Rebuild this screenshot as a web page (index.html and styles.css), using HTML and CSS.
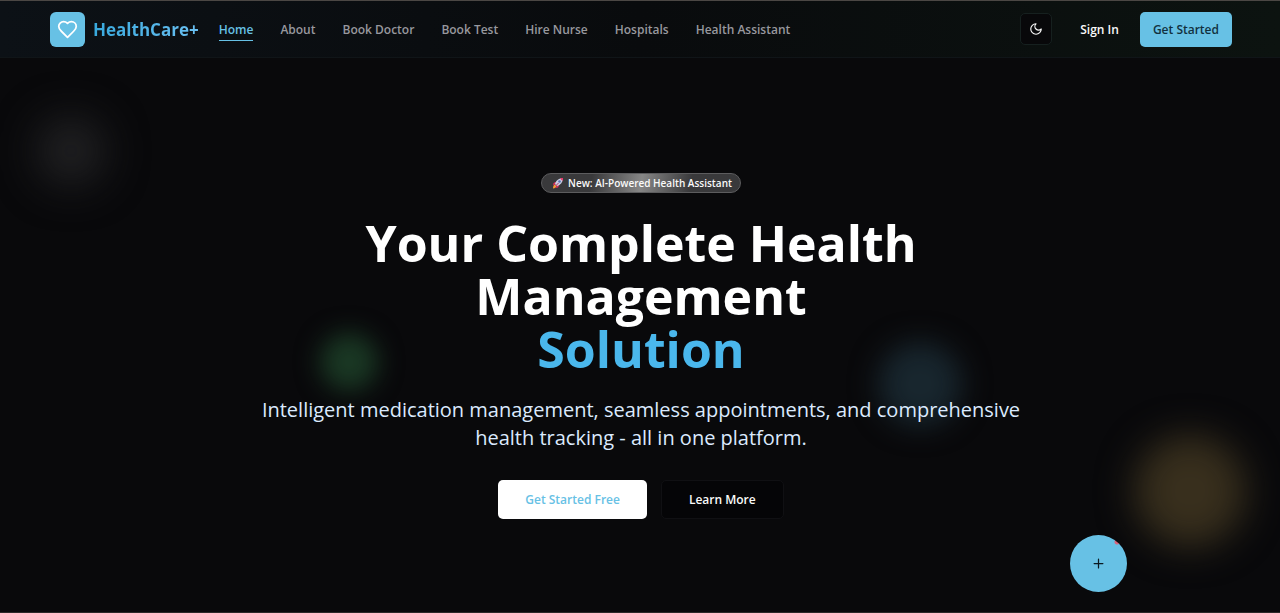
FILE: index.html
```html
<!DOCTYPE html>
<html lang="en">
<head>
<meta charset="utf-8">
<meta name="viewport" content="width=device-width, initial-scale=1">
<title>HealthCare+</title>
<link rel="stylesheet" href="styles.css">
</head>
<body>
<header class="navbar">
  <a class="brand" href="#">
    <span class="brand-mark">
      <svg width="21" height="21" viewBox="0 0 24 24" fill="none" stroke="currentColor" stroke-width="2" stroke-linecap="round" stroke-linejoin="round" aria-hidden="true"><path d="M19 14c1.49-1.46 3-3.21 3-5.5A5.5 5.5 0 0 0 16.500 3c-1.760 0-3 .5-4.500 2-1.500-1.500-2.740-2-4.500-2A5.500 5.500 0 0 0 2 8.500c0 2.300 1.500 4.050 3 5.500l7 7Z"/></svg>
    </span>
    <span class="brand-name">HealthCare+</span>
  </a>
  <nav class="nav-links" aria-label="Main">
    <a class="nav-link active" href="#">Home</a>
    <a class="nav-link" href="#">About</a>
    <a class="nav-link" href="#">Book Doctor</a>
    <a class="nav-link" href="#">Book Test</a>
    <a class="nav-link" href="#">Hire Nurse</a>
    <a class="nav-link" href="#">Hospitals</a>
    <a class="nav-link" href="#">Health Assistant</a>
  </nav>
  <div class="nav-actions">
    <button class="theme-toggle" type="button" aria-label="Toggle theme">
      <svg width="14" height="14" viewBox="0 0 24 24" fill="none" stroke="currentColor" stroke-width="2" stroke-linecap="round" stroke-linejoin="round" aria-hidden="true"><path d="M12 3a6 6 0 0 0 9 9 9 9 0 1 1-9-9Z"/></svg>
    </button>
    <a class="sign-in" href="#">Sign In</a>
    <button class="btn-start" type="button">Get Started</button>
  </div>
</header>

<main class="hero">
  <div class="glow glow-white"></div>
  <div class="glow glow-green"></div>
  <div class="glow glow-blue"></div>
  <div class="glow glow-amber"></div>
  <div class="hero-content">
    <div class="badge">
      <svg class="rocket" width="12" height="12" viewBox="0 0 24 24" aria-hidden="true">
        <path d="M2 23c0-4 1-7 4-8l3 3c-1 3-3 5-7 5Z" fill="#f59a36"/>
        <path d="M9 9 3 12l-1 5 6-3ZM15 15l-3 6-5 1 3-6Z" fill="#dd2e5c"/>
        <path d="M6 14C8 7 14 2 22 2c0 8-5 14-12 16Z" fill="#c9cfe6"/>
        <path d="M16 3c2-1 4-1 6-1 0 2 0 4-1 6Z" fill="#e8396b"/>
        <circle cx="15" cy="9" r="2.600" fill="#5b6fae"/>
        <path d="m8 17 5-5" stroke="#b0305c" stroke-width="2"/>
      </svg>
      <span>New: AI-Powered Health Assistant</span>
    </div>
    <h1 class="title">Your Complete Health Management <span class="title-accent">Solution</span></h1>
    <p class="lead">Intelligent medication management, seamless appointments, and comprehensive health tracking - all in one platform.</p>
    <div class="hero-actions">
      <button class="btn btn-light" type="button">Get Started Free</button>
      <button class="btn btn-dark" type="button">Learn More</button>
    </div>
  </div>
</main>

<button class="fab" type="button" aria-label="Open quick actions">
  <svg width="15" height="15" viewBox="0 0 24 24" fill="none" stroke="currentColor" stroke-width="2" stroke-linecap="round" aria-hidden="true"><path d="M5 12h14M12 5v14"/></svg>
</button>
</body>
</html>
```
FILE: styles.css
```css
* {
  box-sizing: border-box;
}

body {
  margin: 0;
  min-height: 100vh;
  display: flex;
  flex-direction: column;
  background: #09090b;
  color: #fafafa;
  font-family: "Segoe UI", "Open Sans", "Noto Sans", sans-serif;
  font-size: 12px;
  border-top: 1px solid #4b4744;
  border-bottom: 1px solid #2b2929;
}

a {
  color: inherit;
  text-decoration: none;
}

button {
  font: inherit;
  color: inherit;
  border: 0;
  padding: 0;
  cursor: pointer;
}

svg {
  display: block;
}

.navbar {
  display: flex;
  align-items: center;
  height: 57px;
  padding: 0 48px 0 50px;
  border-bottom: 1px solid #101518;
  background: linear-gradient(90deg, #0c1116 0%, #090b0d 50%, #0c1310 100%);
}

.brand {
  display: flex;
  align-items: center;
  gap: 8px;
}

.brand-mark {
  display: grid;
  place-items: center;
  width: 35px;
  height: 35px;
  border-radius: 6px;
  background: #67c1e5;
  color: #fff;
}

.brand-name {
  padding-top: 2px;
  font-size: 17px;
  font-weight: 700;
  line-height: 24px;
  background: linear-gradient(90deg, #38a9dd, #6ac0f2);
  background-clip: text;
  color: transparent;
}

.nav-links {
  display: flex;
  gap: 27px;
  margin-left: 20px;
}

.nav-link {
  padding-top: 3px;
  border-bottom: 1px solid transparent;
  color: #98989e;
  font-weight: 600;
  line-height: 20px;
}

.nav-link.active {
  color: #67c1e5;
  border-color: #67c1e5;
}

.nav-actions {
  display: flex;
  align-items: center;
  margin-left: auto;
  font-weight: 600;
}

.theme-toggle {
  display: grid;
  place-items: center;
  width: 32px;
  height: 32px;
  border: 1px solid #16201f;
  border-radius: 5px;
  background: #08080a;
}

.sign-in {
  padding: 0 21px 0 28px;
}

.btn-start {
  height: 35px;
  padding: 0 13px;
  border-radius: 5px;
  background: #67c1e5;
  color: #12313f;
}

.hero {
  position: relative;
  flex: 1;
  display: flex;
  flex-direction: column;
  align-items: center;
  padding: 115px 24px 40px 26px;
  overflow: hidden;
}

.glow {
  position: absolute;
  border-radius: 50%;
}

.glow-white {
  left: 36px;
  top: 58px;
  width: 70px;
  height: 70px;
  background: #202022;
  filter: blur(20px);
}

.glow-green {
  left: 320px;
  top: 275px;
  width: 58px;
  height: 58px;
  background: #1a3824;
  filter: blur(12px);
}

.glow-blue {
  right: 318px;
  top: 284px;
  width: 84px;
  height: 84px;
  background: #18262e;
  filter: blur(14px);
}

.glow-amber {
  right: 34px;
  top: 377px;
  width: 112px;
  height: 112px;
  background: #382f1d;
  filter: blur(18px);
}

.hero-content {
  position: relative;
  display: flex;
  flex-direction: column;
  align-items: center;
  max-width: 784px;
  text-align: center;
}

.badge {
  display: flex;
  align-items: center;
  gap: 4px;
  height: 20px;
  padding: 0 8px 0 10px;
  border: 1px solid #5c5c5e;
  border-radius: 10px;
  background: linear-gradient(100deg, #39393b 25%, #868686 50%, #39393b 75%);
  font-size: 10px;
  font-weight: 600;
  white-space: nowrap;
}

.title {
  margin: 24px 0 0;
  max-width: 600px;
  font-size: 50px;
  font-weight: 700;
  line-height: 53px;
  color: #fff;
}

.title-accent {
  display: block;
  color: #4ab7ec;
}

.lead {
  margin: 20px 0 0;
  font-size: 20px;
  line-height: 28px;
  color: #dbeafe;
}

.hero-actions {
  display: flex;
  gap: 14px;
  margin-top: 28px;
}

.btn {
  height: 39px;
  padding: 0 27px;
  border-radius: 5px;
  font-weight: 600;
}

.btn-light {
  background: #fff;
  color: #67c1e5;
}

.btn-dark {
  background: #050507;
  border: 1px solid #101013;
}

.fab {
  position: fixed;
  right: 153px;
  bottom: 21px;
  display: grid;
  place-items: center;
  width: 57px;
  height: 57px;
  border-radius: 50%;
  background: radial-gradient(circle at 47px 7px, #d9647c 2px, #67c1e5 3px);
  color: #0b1a22;
}
```
